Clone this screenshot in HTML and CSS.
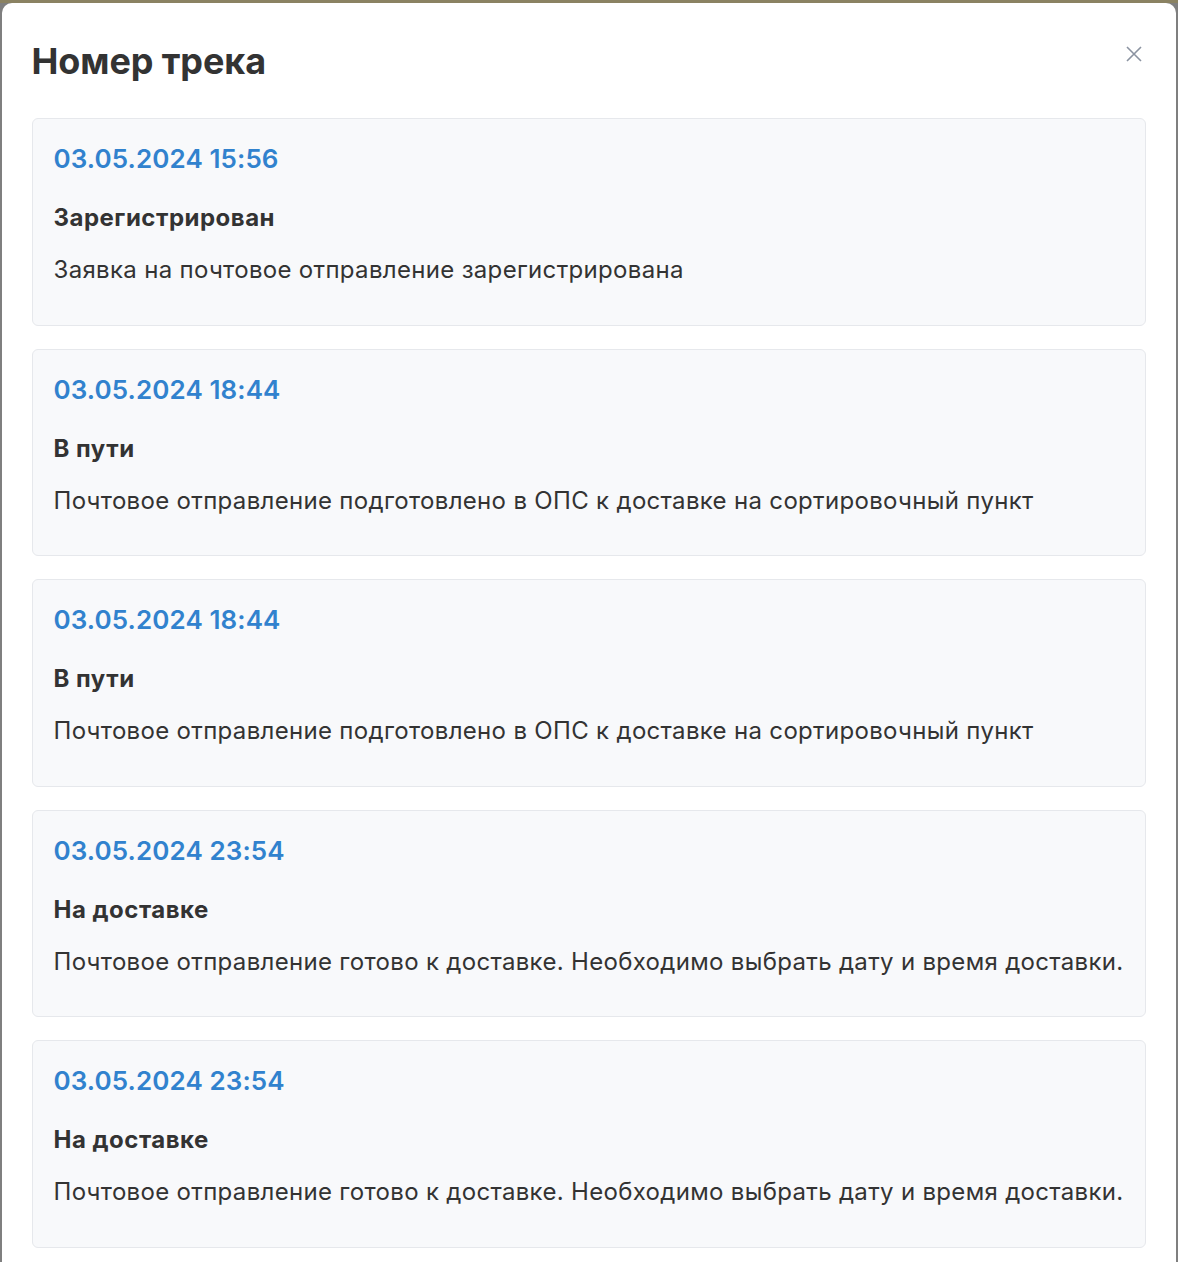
FILE: index.html
```html
<!DOCTYPE html>
<html lang="ru">
<head>
<meta charset="utf-8">
<title>Номер трека</title>
<link rel="stylesheet" href="styles.css">
</head>
<body>
<div class="backdrop">
  <div class="modal">
    <div class="modal-header">
      <h2 class="modal-title">Номер трека</h2>
      <button class="close" aria-label="Закрыть">
        <svg width="16" height="16" viewBox="0 0 16 16"><path d="M1 1L15 15M15 1L1 15" stroke="#8b93a1" stroke-width="1.6" fill="none"/></svg>
      </button>
    </div>
    <div class="list">
      <div class="card">
        <div class="date">03.05.2024 15:56</div>
        <div class="status">Зарегистрирован</div>
        <div class="desc">Заявка на почтовое отправление зарегистрирована</div>
      </div>
      <div class="card">
        <div class="date">03.05.2024 18:44</div>
        <div class="status">В пути</div>
        <div class="desc">Почтовое отправление подготовлено в ОПС к доставке на сортировочный пункт</div>
      </div>
      <div class="card">
        <div class="date">03.05.2024 18:44</div>
        <div class="status">В пути</div>
        <div class="desc">Почтовое отправление подготовлено в ОПС к доставке на сортировочный пункт</div>
      </div>
      <div class="card">
        <div class="date">03.05.2024 23:54</div>
        <div class="status">На доставке</div>
        <div class="desc">Почтовое отправление готово к доставке. Необходимо выбрать дату и время доставки.</div>
      </div>
      <div class="card">
        <div class="date">03.05.2024 23:54</div>
        <div class="status">На доставке</div>
        <div class="desc">Почтовое отправление готово к доставке. Необходимо выбрать дату и время доставки.</div>
      </div>
    </div>
  </div>
</div>
</body>
</html>
```
FILE: styles.css
```css
html, body {
  margin: 0;
  padding: 0;
  height: 100%;
  overflow: hidden;
}
body {
  background: #7f7f7f;
  font-family: Inter, "Noto Sans", sans-serif;
  color: #333333;
}
.backdrop {
  border-top: 3px solid #8a8262;
  padding: 0 2px;
  height: 100%;
  box-sizing: border-box;
}
.modal {
  background: #ffffff;
  border-radius: 10px 10px 0 0;
  height: 100%;
  padding: 0 30px 0 29.5px;
  box-sizing: border-box;
}
.modal-header {
  display: flex;
  align-items: flex-start;
  justify-content: space-between;
  padding-top: 36px;
  height: 115px;
  box-sizing: border-box;
}
.modal-title {
  margin: 0;
  font-size: 36px;
  font-weight: 700;
  line-height: 44px;
  color: #333333;
  letter-spacing: -0.1px;
}
.close {
  background: none;
  border: 0;
  padding: 0;
  margin: 7px 4px 0 0;
  width: 16px;
  height: 16px;
  cursor: pointer;
}
.close svg { display: block; }
.list {
  display: flex;
  flex-direction: column;
  gap: 23px;
}
.card {
  background: #f8f9fb;
  border: 1px solid #e6e8ec;
  border-radius: 6px;
  padding: 22px 8px 22px 21px;
  height: 207.5px;
  box-sizing: border-box;
}
.date {
  color: #3182ce;
  font-size: 26px;
  font-weight: 600;
  line-height: 36px;
  letter-spacing: 0.1px;
}
.status {
  margin-top: 26px;
  font-size: 24px;
  font-weight: 700;
  line-height: 30px;
  letter-spacing: 0.5px;
}
.desc {
  margin-top: 22px;
  font-size: 24px;
  font-weight: 400;
  line-height: 30px;
  letter-spacing: 0.32px;
  white-space: nowrap;
}
```
